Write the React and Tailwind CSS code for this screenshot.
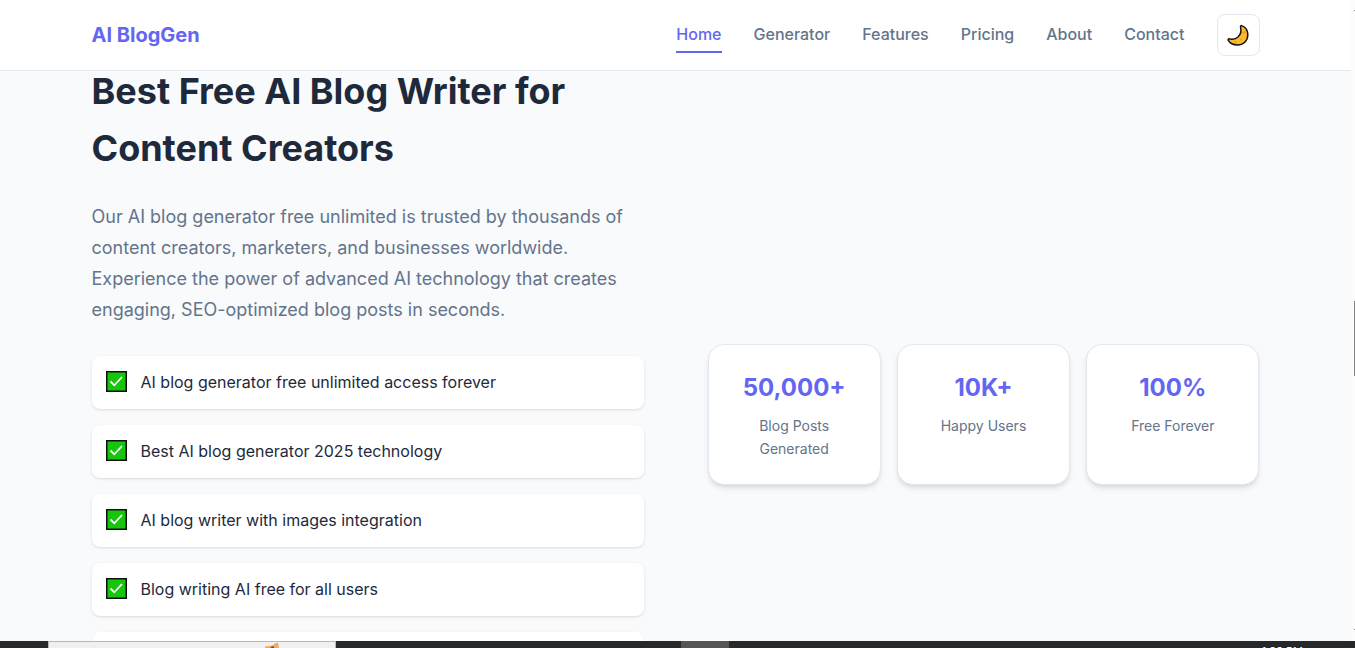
const links = ["Home", "Generator", "Features", "Pricing", "About", "Contact"];

const benefits = [
  "AI blog generator free unlimited access forever",
  "Best AI blog generator 2025 technology",
  "AI blog writer with images integration",
  "Blog writing AI free for all users",
  "",
];

const stats = [
  { value: "50,000+", label: "Blog Posts Generated" },
  { value: "10K+", label: "Happy Users" },
  { value: "100%", label: "Free Forever" },
];

function MoonIcon() {
  return (
    <svg viewBox="0 0 22 22" className="size-[22px]" aria-hidden="true">
      <path
        d="M14.6 1.6C18.4 3 20.8 6.800 20.800 11C20.800 16.800 16.200 21 10.500 21C6.500 21 2.800 19.300 1.200 16.200C0.800 14.800 1.900 14.400 3 14.900C5.500 15.500 8.800 15 11.200 12.800C13.700 10.400 14.500 7 13.600 3.600C13.300 2.600 13.600 1.700 14.600 1.600Z"
        fill="#fdb92e"
        stroke="#151515"
        strokeWidth="1.5"
        strokeLinejoin="round"
      />
      <circle cx="17" cy="8.500" r="1.300" fill="#f59a1b" />
      <circle cx="14" cy="15.500" r="1" fill="#f59a1b" />
      <circle cx="8.500" cy="18" r="1" fill="#f59a1b" />
    </svg>
  );
}

function CheckIcon() {
  return (
    <svg viewBox="0 0 21 21" className="size-[21px] shrink-0" aria-hidden="true">
      <rect x="0.75" y="0.75" width="19.5" height="19.5" fill="#16c60c" stroke="#101010" strokeWidth="1.500" />
      <path d="M4.500 10.500L8.300 14.300L16 6" fill="none" stroke="#fff" strokeWidth="1.800" />
    </svg>
  );
}

function Header() {
  return (
    <header className="relative z-10 shrink-0 border-b border-[#e2e8f0] bg-white">
      <div className="mx-auto flex h-[70px] max-w-[1200px] items-center justify-between px-4">
        <a href="#home" className="text-xl font-bold text-[#6366f1]">
          AI BlogGen
        </a>
        <div className="flex items-center gap-8">
          <nav className="flex gap-8">
            {links.map((link) => (
              <a
                key={link}
                href={"#" + link.toLowerCase()}
                className={
                  link === "Home"
                    ? "relative pt-1 pb-1.5 font-medium text-[#6366f1] after:absolute after:inset-x-0 after:-bottom-px after:h-0.5 after:bg-[#6366f1]"
                    : "pt-1 pb-1.5 font-medium text-[#64748b]"
                }
              >
                {link}
              </a>
            ))}
          </nav>
          <button
            type="button"
            aria-label="Toggle theme"
            className="flex h-[42px] w-[43px] items-center justify-center rounded-lg border border-[#e2e8f0] bg-white"
          >
            <MoonIcon />
          </button>
        </div>
      </div>
    </header>
  );
}

function Benefits() {
  return (
    <section className="mx-auto -mt-2 grid max-w-[1200px] grid-cols-2 gap-16 px-4">
      <div>
        <h2 className="text-4xl leading-[57px] font-bold">Best Free AI Blog Writer for Content Creators</h2>
        <p className="mt-6 text-lg leading-[31px] text-[#64748b]">
          Our AI blog generator free unlimited is trusted by thousands of content creators, marketers, and businesses
          worldwide. Experience the power of advanced AI technology that creates engaging, SEO-optimized blog posts in
          seconds.
        </p>
        <ul className="mt-[31px] flex flex-col gap-4">
          {benefits.map((text, i) => (
            <li key={i} className="flex h-[53px] items-center gap-3.5 rounded-lg bg-white px-3.5 pb-0.5 shadow-sm">
              <CheckIcon />
              <span>{text}</span>
            </li>
          ))}
        </ul>
      </div>
      <dl className="mt-[281px] grid grid-cols-3 gap-4 self-start text-center">
        {stats.map(({ value, label }) => (
          <div
            key={label}
            className="flex flex-col-reverse justify-end gap-2 rounded-2xl border border-[#e2e8f0] bg-white p-6 shadow-md"
          >
            <dt className="text-sm leading-[23px] text-[#64748b]">{label}</dt>
            <dd className="text-2xl leading-[37px] font-bold text-[#6366f1]">{value}</dd>
          </div>
        ))}
      </dl>
    </section>
  );
}

function Scrollbar() {
  return (
    <div className="flex w-1 flex-col items-end justify-between bg-[#fcfcfc] pt-2.5 pb-[11px]">
      <div className="h-px w-px bg-[#858585]" />
      <div className="mt-9 h-[75px] w-px bg-[#858585]" />
      <div className="h-px w-px bg-[#858585]" />
    </div>
  );
}

function Taskbar() {
  return (
    <footer className="flex h-[7px] shrink-0 overflow-hidden bg-[#272829] pl-12">
      <div className="flex w-72 justify-end border border-b-0 border-[#b8b8b8] bg-[#f0f0f0] pr-14">
        <svg viewBox="0 0 14 6" className="h-[6px] w-[14px]" aria-hidden="true">
          <path d="M0 6V4.500L7 3.500L11 1L13 0.500L14 6Z" fill="#f3ac5c" />
          <path d="M5 6L7 4.500H9V6Z" fill="#6b4a28" />
        </svg>
      </div>
      <div className="ml-[345px] w-12 bg-[#555]" />
      <time className="mr-[52px] ml-auto pt-0.5 text-[11px] leading-4 whitespace-nowrap text-white">1:33 PM</time>
    </footer>
  );
}

export default function App() {
  return (
    <div className="flex h-screen flex-col overflow-hidden bg-[#f8fafc] font-['Inter',sans-serif] text-[#1e293b]">
      <div className="flex min-h-0 flex-1">
        <div className="flex min-w-0 flex-1 flex-col">
          <Header />
          <main className="min-h-0 flex-1 overflow-hidden">
            <Benefits />
          </main>
        </div>
        <Scrollbar />
      </div>
      <Taskbar />
    </div>
  );
}
